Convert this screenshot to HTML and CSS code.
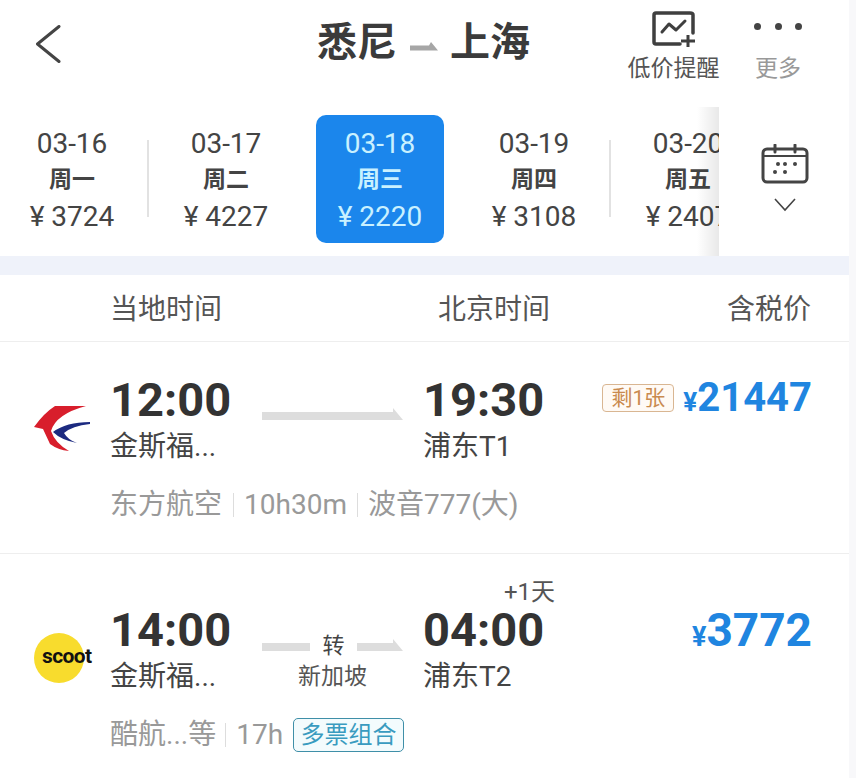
FILE: index.html
```html
<!DOCTYPE html>
<html lang="zh-CN">
<head>
    <meta charset="UTF-8">
    <meta name="viewport" content="width=device-width, initial-scale=1.0">
    <title>悉尼 - 上海</title>
    <link rel="stylesheet" href="styles.css">
</head>
<body>
    <div class="page">
        <!-- 顶部标题栏 -->
        <header class="top-bar">
            <svg class="back-icon" viewBox="0 0 26 38" width="26" height="38">
                <path d="M24 1.5 L2.5 19 L24 36.5" fill="none" stroke="#444" stroke-width="3" stroke-linecap="round" stroke-linejoin="round"/>
            </svg>
            <h1 class="title">
                <span>悉尼</span>
                <svg class="title-arrow" viewBox="0 0 28 9" width="28" height="9">
                    <path d="M0 3.5 H19 L21 0 L28 8.5 H0 Z" fill="#a6a6a6"/>
                </svg>
                <span>上海</span>
            </h1>
            <div class="actions">
                <div class="action">
                    <svg class="action-icon" viewBox="0 0 44 36" width="44" height="36">
                        <path d="M28 33 H4 Q2 33 2 31 V4 Q2 2 4 2 H38 Q41 2 41 4 V22" fill="none" stroke="#3f3f3f" stroke-width="3.5" stroke-linecap="round"/>
                        <path d="M10 21 L17 13 L24 19 L33 10" fill="none" stroke="#3f3f3f" stroke-width="3" stroke-linecap="round" stroke-linejoin="round"/>
                        <path d="M36 24 V36 M29 30 H43" fill="none" stroke="#3f3f3f" stroke-width="3"/>
                    </svg>
                    <span>低价提醒</span>
                </div>
                <div class="action action-more">
                    <div class="dots"><i></i><i></i><i></i></div>
                    <span>更多</span>
                </div>
            </div>
        </header>

        <!-- 日期价格 -->
        <section class="date-bar">
            <div class="date-track">
                <div class="date-item">
                    <span class="date-day">03-16</span>
                    <span class="date-week">周一</span>
                    <span class="date-price">¥ 3724</span>
                </div>
                <div class="date-item has-line">
                    <span class="date-day">03-17</span>
                    <span class="date-week">周二</span>
                    <span class="date-price">¥ 4227</span>
                </div>
                <div class="date-item selected">
                    <span class="date-day">03-18</span>
                    <span class="date-week">周三</span>
                    <span class="date-price">¥ 2220</span>
                </div>
                <div class="date-item">
                    <span class="date-day">03-19</span>
                    <span class="date-week">周四</span>
                    <span class="date-price">¥ 3108</span>
                </div>
                <div class="date-item has-line">
                    <span class="date-day">03-20</span>
                    <span class="date-week">周五</span>
                    <span class="date-price">¥ 2407</span>
                </div>
            </div>
            <div class="calendar-panel">
                <svg viewBox="0 0 48 40" width="48" height="40">
                    <rect x="2" y="5" width="44" height="33" rx="4" fill="none" stroke="#444" stroke-width="3"/>
                    <path d="M2 12 H46" stroke="#444" stroke-width="2"/>
                    <path d="M14 1 V8 M34 1 V8" stroke="#444" stroke-width="3" stroke-linecap="round"/>
                    <g fill="#444">
                        <circle cx="17" cy="20" r="2"/><circle cx="24" cy="20" r="2"/><circle cx="34" cy="20" r="2"/>
                        <circle cx="14" cy="28" r="2"/><circle cx="24" cy="28" r="2"/>
                    </g>
                </svg>
                <svg class="calendar-chevron" viewBox="0 0 22 14" width="22" height="14">
                    <path d="M1 1 L11 12 L21 1" fill="none" stroke="#444" stroke-width="1.6"/>
                </svg>
            </div>
        </section>

        <div class="band"></div>

        <!-- 列标题 -->
        <div class="columns">
            <span class="col-local">当地时间</span>
            <span class="col-beijing">北京时间</span>
            <span class="col-price">含税价</span>
        </div>

        <!-- 航班一 -->
        <article class="flight first">
            <div class="flight-main">
                <div class="logo-cell">
                    <svg viewBox="0 0 58 46" width="58" height="46">
                        <path d="M52 1 L21 1 Q10 8 0 22 L9 24 L16 39 Q24 45 35 46 Q21 38 17 26 Q22 9 52 1 Z" fill="#d81e2c"/>
                        <path d="M56 17 Q32 17 19 27 Q27 35 43 38 Q34 35 30 28 Q38 21 56 19 Z" fill="#1c2a80"/>
                    </svg>
                </div>
                <div class="time-col">
                    <div class="time">12:00</div>
                    <div class="station">金斯福...</div>
                </div>
                <div class="route">
                    <div class="route-line">
                        <svg viewBox="0 0 141 12" width="141" height="12" preserveAspectRatio="none">
                            <path d="M0 4 H131 V0 L141 12 H0 Z" fill="#ddd"/>
                        </svg>
                    </div>
                </div>
                <div class="time-col arrive">
                    <div class="time">19:30</div>
                    <div class="station">浦东T1</div>
                </div>
                <div class="price-cell">
                    <span class="left-tag">剩1张</span>
                    <span class="price"><small>¥</small>21447</span>
                </div>
            </div>
            <div class="meta">
                <span>东方航空</span><i></i><span>10h30m</span><i></i><span>波音777(大)</span>
            </div>
        </article>

        <!-- 航班二 -->
        <article class="flight second">
            <div class="flight-main">
                <div class="logo-cell">
                    <div class="scoot-logo">scoot</div>
                </div>
                <div class="time-col">
                    <div class="time">14:00</div>
                    <div class="station">金斯福...</div>
                </div>
                <div class="route">
                    <div class="route-line transfer">
                        <svg viewBox="0 0 48 8" width="48" height="8"><rect width="48" height="8" y="0" fill="#ddd"/></svg>
                        <span>转</span>
                        <svg viewBox="0 0 46 12" width="46" height="12" class="seg-end"><path d="M0 4 H36 V0 L46 12 H0 Z" fill="#ddd"/></svg>
                    </div>
                    <div class="via">新加坡</div>
                </div>
                <div class="time-col arrive">
                    <span class="next-day">+1天</span>
                    <div class="time">04:00</div>
                    <div class="station">浦东T2</div>
                </div>
                <div class="price-cell">
                    <span class="price large"><small>¥</small>3772</span>
                </div>
            </div>
            <div class="meta">
                <span>酷航...等</span><i></i><span>17h</span><em class="combo-tag">多票组合</em>
            </div>
        </article>
    </div>
</body>
</html>
```

FILE: styles.css
```css
html, body {
    margin: 0;
    padding: 0;
    height: 778px;
    overflow: hidden;
    background: #f8f8fa;
}

body {
    font-family: Roboto, "Noto Sans CJK SC", sans-serif;
    color: #444;
}

.page {
    width: 849px;
    height: 778px;
    background: #fff;
}

/* 顶部标题栏 */
.top-bar {
    height: 107px;
    display: flex;
    align-items: flex-start;
    box-sizing: border-box;
    padding-left: 35px;
}

.back-icon {
    margin-top: 25px;
    flex: none;
}

.title {
    margin: 15px 0 0 256px;
    width: 291px;
    flex: none;
    display: flex;
    align-items: center;
    font-size: 40px;
    line-height: 56px;
    font-weight: 700;
    color: #3b3b3b;
    white-space: nowrap;
}

.title-arrow {
    margin: 6px 12px 0 13px;
    flex: none;
}

.actions {
    display: flex;
    margin-left: 19px;
    gap: 35px;
}

.action {
    display: flex;
    flex-direction: column;
    align-items: center;
    width: 93px;
    font-size: 23px;
    line-height: 30px;
    color: #555;
    padding-top: 11px;
}

.action-icon {
    height: 36px;
    margin-bottom: 7px;
}

.action-more {
    width: 46px;
    color: #999;
}

.dots {
    height: 43px;
    display: flex;
    gap: 13.5px;
    padding-top: 12px;
    box-sizing: border-box;
}

.dots i {
    width: 7px;
    height: 7px;
    border-radius: 50%;
    background: #444;
}

/* 日期价格 */
.date-bar {
    display: flex;
    height: 149px;
}

.date-track {
    width: 719px;
    flex: none;
    display: flex;
    overflow: hidden;
    padding: 8px 0 13px;
    box-sizing: border-box;
}

.date-item {
    position: relative;
    flex: none;
    width: 154px;
    height: 128px;
    box-sizing: border-box;
    padding-top: 11px;
    display: flex;
    flex-direction: column;
    align-items: center;
    font-size: 28px;
    line-height: 37px;
    color: #444;
    white-space: nowrap;
}

.date-item:first-child {
    margin-left: -5px;
}

.date-item.has-line::before {
    content: "";
    position: absolute;
    left: -2px;
    top: 25px;
    width: 2px;
    height: 77px;
    background: #e2e2e2;
}

.date-day {
    line-height: 35px;
}

.date-week {
    font-size: 23px;
    font-weight: 700;
    line-height: 37px;
}

.date-item.selected {
    width: 128px;
    margin: 0 13px;
    border-radius: 10px;
    background: #1b86ec;
    color: #c9f1ff;
}

.calendar-panel {
    flex: 1;
    display: flex;
    flex-direction: column;
    align-items: flex-start;
    box-sizing: border-box;
    padding: 37px 0 0 42px;
    background: #fff;
    position: relative;
}

/* 日期条右侧的渐隐阴影 */
.calendar-panel::before {
    content: "";
    position: absolute;
    left: -22px;
    top: 0;
    width: 22px;
    height: 100%;
    background: linear-gradient(to right, rgba(0, 0, 0, 0), rgba(0, 0, 0, 0.09));
}

.calendar-chevron {
    margin: 14px 0 0 13px;
}

.band {
    height: 19px;
    background: #eff2fa;
}

/* 列标题 */
.columns {
    height: 67px;
    box-sizing: border-box;
    display: flex;
    align-items: center;
    padding: 0 38px 3px 110px;
    font-size: 28px;
    color: #555;
    border-bottom: 1px solid #eee;
}

.col-beijing {
    margin-left: 216px;
}

.col-price {
    margin-left: auto;
}

/* 航班 */
.flight {
    box-sizing: border-box;
    padding-left: 34px;
    padding-right: 37px;
}

.flight.first {
    height: 212px;
    padding-top: 30px;
    border-bottom: 1px solid #eee;
}

.flight.second {
    padding-top: 48px;
}

.flight-main {
    display: flex;
    align-items: flex-start;
}

.logo-cell {
    width: 77px;
    flex: none;
    padding-top: 33px;
}

.logo-cell svg {
    display: block;
}

.second .logo-cell {
    padding-top: 31px;
}

.scoot-logo {
    width: 50px;
    height: 50px;
    border-radius: 50%;
    background: #f8dc2d;
    font-size: 21px;
    font-weight: 700;
    letter-spacing: -0.6px;
    line-height: 47px;
    color: #111;
    white-space: nowrap;
    text-indent: 8px;
}

.time-col {
    width: 151px;
    flex: none;
}

.time-col.arrive {
    position: relative;
    width: 130px;
    margin-left: 21px;
}

.time {
    font-size: 47px;
    line-height: 56px;
    font-weight: 700;
    color: #333;
    margin-left: -1px;
}

.station {
    font-size: 28px;
    line-height: 38px;
    color: #444;
    white-space: nowrap;
    margin-left: -1px;
}

.next-day {
    position: absolute;
    right: -1px;
    top: -22px;
    font-size: 24px;
    line-height: 24px;
    color: #555;
}

.route {
    width: 141px;
    flex: none;
    padding-top: 36px;
}

.route-line svg {
    display: block;
}

.route-line.transfer {
    display: flex;
    justify-content: space-between;
    align-items: flex-start;
    height: 24px;
}

.route-line.transfer svg {
    margin-top: 5px;
}

.route-line.transfer .seg-end {
    margin-top: 1px;
}

.route-line.transfer span {
    font-size: 22px;
    line-height: 24px;
    color: #444;
    margin-top: -4px;
}

.via {
    margin-top: 0;
    font-size: 23px;
    line-height: 30px;
    text-align: center;
    color: #555;
}

.price-cell {
    flex: 1;
    display: flex;
    justify-content: flex-end;
    align-items: center;
    gap: 9px;
    height: 56px;
    white-space: nowrap;
}

.left-tag {
    box-sizing: border-box;
    width: 72px;
    height: 28px;
    margin-top: -4px;
    border: 1px solid #d9b692;
    border-radius: 4px;
    background: #fffaf5;
    font-size: 21px;
    line-height: 26px;
    text-align: center;
    color: #c98a4f;
}

.price {
    font-size: 40px;
    line-height: 56px;
    font-weight: 700;
    color: #2085e0;
    margin-top: 0;
}

.price.large {
    font-size: 46px;
    margin-top: 6px;
}

.price small {
    font-size: 26px;
}

.price.large small {
    font-size: 27px;
}

.meta {
    display: flex;
    align-items: center;
    height: 36px;
    margin: 21px 0 0 76px;
    font-size: 28px;
    line-height: 36px;
    color: #999;
    white-space: nowrap;
}

.meta i {
    width: 1px;
    height: 24px;
    margin: 0 10px 0 11px;
    background: #ddd;
}

.meta i + span + i {
    margin: 0 10px;
}

.second .meta i {
    margin: 0 10px 0 9px;
}

.combo-tag {
    box-sizing: border-box;
    width: 111px;
    height: 34px;
    margin-left: 10px;
    border: 1px solid #3f8fa8;
    border-radius: 5px;
    background: #f3fbfd;
    font-style: normal;
    font-size: 24px;
    line-height: 32px;
    text-align: center;
    color: #3a9bc0;
}
```
